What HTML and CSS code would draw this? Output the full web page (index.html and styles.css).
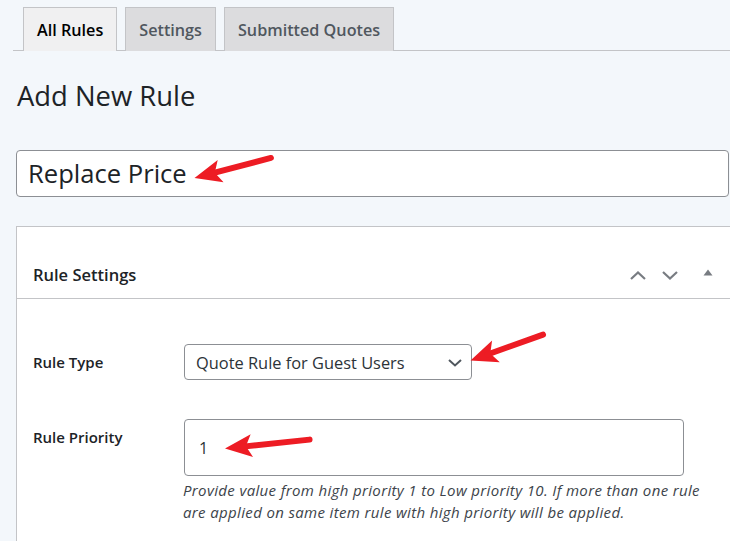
FILE: index.html
```html
<!DOCTYPE html>
<html lang="en">
<head>
<meta charset="utf-8">
<title>Add New Rule</title>
<link rel="stylesheet" href="styles.css">
</head>
<body>
<div class="wrap">
  <nav class="tabs">
    <a class="tab active">All Rules</a>
    <a class="tab">Settings</a>
    <a class="tab">Submitted Quotes</a>
  </nav>
  <h1 class="page-title">Add New Rule</h1>
  <input class="title-input" type="text" value="Replace Price">
  <div class="postbox">
    <div class="pb-head">
      <h2 class="pb-title">Rule Settings</h2>
      <div class="pb-actions">
        <span class="pb-btn up"><svg width="16" height="9" viewBox="0 0 16 9"><path d="M1 8 L8 1.5 L15 8" fill="none" stroke="#787c82" stroke-width="2.2"/></svg></span>
        <span class="pb-btn down"><svg width="16" height="9" viewBox="0 0 16 9"><path d="M1 1 L8 7.5 L15 1" fill="none" stroke="#787c82" stroke-width="2.2"/></svg></span>
        <span class="pb-btn toggle"><svg width="10" height="7" viewBox="0 0 10 7"><path d="M0.5 6.5 L5 0.5 L9.5 6.5 Z" fill="#787c82"/></svg></span>
      </div>
    </div>
    <div class="pb-body">
      <div class="field-label">Rule Type</div>
      <div class="field">
        <div class="select">
          <span>Quote Rule for Guest Users</span>
          <svg width="14" height="8" viewBox="0 0 14 8"><path d="M1 1 L7 6.5 L13 1" fill="none" stroke="#50575e" stroke-width="2"/></svg>
        </div>
      </div>
      <div class="field-label">Rule Priority</div>
      <div class="field">
        <input class="num-input" type="text" value="1">
        <p class="description">Provide value from high priority 1 to Low priority 10. If more than one rule<br>are applied on same item rule with high priority will be applied.</p>
      </div>
    </div>
  </div>
</div>
<svg class="arrows" width="730" height="541" viewBox="0 0 730 541">
  <g transform="translate(194.5,178) rotate(-14.7)" fill="#ed1c24">
    <polygon points="0,0 27,-11.5 21,0 27,11.5"/>
    <line x1="18" y1="0" x2="79" y2="0" stroke="#ed1c24" stroke-width="6" stroke-linecap="round"/>
  </g>
  <g transform="translate(470.5,360.5) rotate(-19.6)" fill="#ed1c24">
    <polygon points="0,0 27,-11.5 21,0 27,11.5"/>
    <line x1="18" y1="0" x2="77" y2="0" stroke="#ed1c24" stroke-width="6" stroke-linecap="round"/>
  </g>
  <g transform="translate(225,448.5) rotate(-6)" fill="#ed1c24">
    <polygon points="0,0 27,-11.5 21,0 27,11.5"/>
    <line x1="18" y1="0" x2="85" y2="0" stroke="#ed1c24" stroke-width="6" stroke-linecap="round"/>
  </g>
</svg>
</body>
</html>
```
FILE: styles.css
```css
html, body {
  margin: 0;
  padding: 0;
}
body {
  width: 730px;
  height: 541px;
  overflow: hidden;
  position: relative;
  background: #f3f7fb;
  font-family: "Open Sans", "Noto Sans", sans-serif;
  color: #1d2327;
}
.wrap {
  padding-left: 16px;
}
.tabs {
  display: flex;
  gap: 8px;
  margin-left: -3px;
  padding: 7px 0 0 10px;
  border-bottom: 1px solid #c3c4c7;
  height: 51px;
  box-sizing: border-box;
  width: 740px;
}
.tab {
  box-sizing: border-box;
  height: 44px;
  display: flex;
  align-items: center;
  padding: 0 13px;
  border: 1px solid #c3c4c7;
  border-bottom: none;
  background: #dcdcde;
  color: #50575e;
  font-size: 16.2px;
  font-weight: 600;
}
.tab.active {
  background: #f0f0f1;
  color: #000;
}
.page-title {
  margin: 28px 0 0 1px;
  font-size: 27.4px;
  font-weight: 400;
  line-height: 34px;
  color: #1d2327;
}
.title-input {
  display: block;
  box-sizing: border-box;
  margin: 37px 0 0;
  width: 713px;
  height: 47px;
  padding: 0 11px;
  border: 1px solid #8c8f94;
  border-radius: 4px;
  background: #fff;
  font-family: inherit;
  font-size: 25.6px;
  color: #1d2327;
  outline: none;
}
.postbox {
  box-sizing: border-box;
  margin-top: 29px;
  width: 715px;
  height: 320px;
  border: 1px solid #c3c4c7;
  background: #fff;
}
.pb-head {
  display: flex;
  align-items: center;
  height: 72px;
  box-sizing: border-box;
  padding: 36px 0 11px 16px;
  border-bottom: 1px solid #c3c4c7;
}
.pb-title {
  margin: 0;
  font-size: 16.5px;
  font-weight: 600;
  line-height: 24px;
  color: #1d2327;
}
.pb-actions {
  margin-left: auto;
  display: flex;
  align-items: center;
}
.pb-btn {
  display: flex;
  align-items: center;
  justify-content: center;
  height: 24px;
}
.pb-btn.up, .pb-btn.down {
  width: 32px;
}
.pb-btn.toggle {
  width: 44px;
  padding-bottom: 6px;
  box-sizing: border-box;
}
.pb-body {
  display: grid;
  grid-template-columns: 151px 1fr;
  row-gap: 39px;
  padding: 45px 0 0 16px;
}
.field-label {
  font-size: 15px;
  font-weight: 600;
  line-height: 36px;
  color: #1d2327;
}
.select {
  box-sizing: border-box;
  width: 288px;
  height: 36px;
  display: flex;
  align-items: center;
  justify-content: space-between;
  padding: 1px 9px 0 11px;
  border: 1px solid #8c8f94;
  border-radius: 4px;
  background: #fff;
  font-size: 16.4px;
  color: #2c3338;
}
.num-input {
  display: block;
  box-sizing: border-box;
  width: 500px;
  height: 57px;
  padding: 0 14px;
  border: 1px solid #8c8f94;
  border-radius: 4px;
  background: #fff;
  font-family: inherit;
  font-size: 16px;
  color: #2c3338;
  outline: none;
}
.description {
  margin: 3px 0 0 -1px;
  font-size: 15px;
  letter-spacing: 0.35px;
  font-style: italic;
  line-height: 22px;
  color: #3c434a;
  white-space: nowrap;
}
.arrows {
  position: absolute;
  left: 0;
  top: 0;
  pointer-events: none;
}
```
